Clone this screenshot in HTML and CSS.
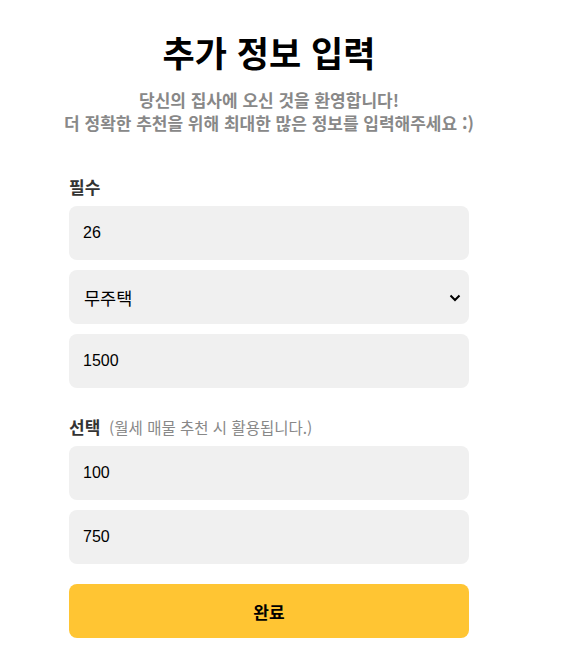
FILE: index.html
```html
<!DOCTYPE html>
<html lang="ko">
<head>
<meta charset="utf-8">
<link rel="stylesheet" href="styles.css">
</head>
<body>
<div class="page">
  <h1 class="title">추가 정보 입력</h1>
  <p class="subtitle">당신의 집사에 오신 것을 환영합니다!<br>더 정확한 추천을 위해 최대한 많은 정보를 입력해주세요 :)</p>
  <form class="form">
    <div class="group">
      <div class="label">필수</div>
      <input class="field" type="text" value="26">
      <div class="select-wrap">
        <select class="field select">
          <option>무주택</option>
        </select>
        <svg class="chevron" width="12" height="8" viewBox="0 0 12 8"><path d="M1.5 1.5 L6 6 L10.5 1.5" fill="none" stroke="#000" stroke-width="2"/></svg>
      </div>
      <input class="field" type="text" value="1500">
    </div>
    <div class="group">
      <div class="label">선택 <span class="hint">(월세 매물 추천 시 활용됩니다.)</span></div>
      <input class="field" type="text" value="100">
      <input class="field" type="text" value="750">
    </div>
    <button class="submit" type="button">완료</button>
  </form>
</div>
</body>
</html>
```
FILE: styles.css
```css
* { box-sizing: border-box; }
body {
  margin: 0;
  background: #fff;
  font-family: "Noto Sans CJK KR", "Noto Sans", sans-serif;
}
.page {
  width: 538px;
  display: flex;
  flex-direction: column;
  align-items: center;
  padding-top: 24px;
}
.title {
  margin: 0;
  font-size: 35px;
  font-weight: 700;
  line-height: 56px;
  color: #000;
}
.subtitle {
  margin: 8px 0 0;
  text-align: center;
  font-size: 17px;
  font-weight: 700;
  line-height: 23px;
  color: #888;
}
.form {
  width: 400px;
  margin-top: 38px;
  display: flex;
  flex-direction: column;
}
.group {
  display: flex;
  flex-direction: column;
  gap: 10px;
  margin-bottom: 24px;
}
.label {
  font-size: 17px;
  font-weight: 700;
  color: #333;
  line-height: 24px;
  margin-top: 3px;
  margin-bottom: -3px;
}
.hint {
  font-size: 15.5px;
  font-weight: 400;
  color: #888;
  margin-left: 4px;
}
.field {
  width: 400px;
  height: 54px;
  border: none;
  border-radius: 8px;
  background: #f0f0f0;
  padding: 0 14px;
  font-family: "Liberation Sans", Arial, sans-serif;
  font-size: 16px;
  color: #000;
  outline: none;
}
.select-wrap {
  position: relative;
}
.select {
  appearance: none;
  -webkit-appearance: none;
  font-family: "Noto Sans CJK KR", sans-serif;
  font-size: 17.5px;
  padding-left: 15px;
  display: block;
}
.chevron {
  position: absolute;
  right: 8px;
  top: 24px;
  pointer-events: none;
}
.group:last-of-type {
  margin-bottom: 20px;
}
.submit {
  width: 400px;
  height: 54px;
  border: none;
  border-radius: 8px;
  background: #ffc533;
  font-family: "Noto Sans CJK KR", sans-serif;
  font-size: 17px;
  font-weight: 700;
  color: #000;
}
```
